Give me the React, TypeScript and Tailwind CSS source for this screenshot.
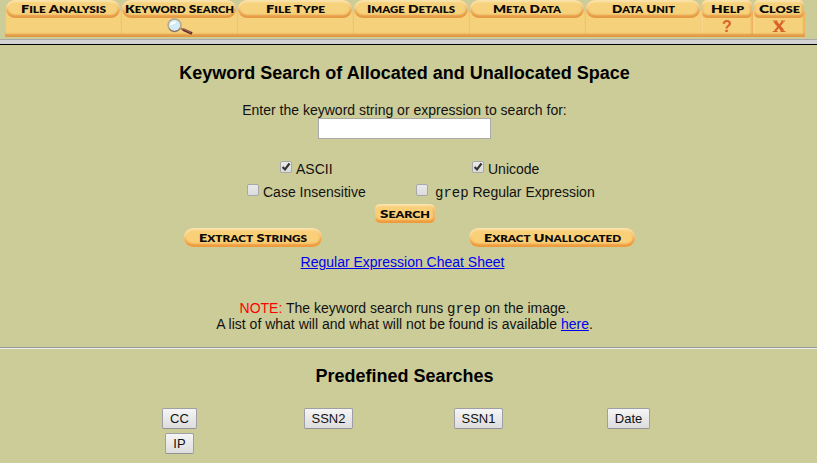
import React from "react";

function Caps({ text, width }: { text: string; width: number }) {
  return (
    <svg width={width} height="12" className="block overflow-visible" aria-label={text}>
      <text x="0" y="10" textLength={width} lengthAdjust="spacingAndGlyphs" fill="#0c0b08" fontFamily="Lato, sans-serif" fontWeight="800">
        {text.split(" ").map((w, i) => (
          <React.Fragment key={i}>
            <tspan fontSize="12">{(i ? " " : "") + w[0]}</tspan>
            <tspan fontSize="9.800">{w.slice(1)}</tspan>
          </React.Fragment>
        ))}
      </text>
    </svg>
  );
}

const tabs = [
  { label: "FILE ANALYSIS", cell: "w-[116px]", w: 85 },
  { label: "KEYWORD SEARCH", cell: "w-[116px]", w: 109, icon: "search" },
  { label: "FILE TYPE", cell: "w-[116px]", w: 59 },
  { label: "IMAGE DETAILS", cell: "w-[116px]", w: 88 },
  { label: "META DATA", cell: "w-[116px]", w: 68 },
  { label: "DATA UNIT", cell: "w-[116px]", w: 63 },
  { label: "HELP", cell: "w-[52px]", w: 33, icon: "help" },
  { label: "CLOSE", cell: "w-[52px]", w: 41, icon: "close" },
];

function Magnifier() {
  return (
    <svg width="28" height="18" viewBox="0 0 28 18" className="ml-0.5">
      <path d="M13 9.500 L18 12" stroke="#9c5d50" strokeWidth="1.800" />
      <path d="M17 11.500 L26 15.500" stroke="#6b2c2c" strokeWidth="3" />
      <path d="M17 10.800 L25 14.500" stroke="#b08a80" strokeWidth="0.7" />
      <circle cx="8.500" cy="7.300" r="6.400" fill="#d3ecf4" stroke="#b3a58f" strokeWidth="1.500" />
      <path d="M3.500 11 A6.400 6.400 0 0 0 13.500 11" fill="none" stroke="#7d5c50" strokeWidth="1" />
      <path d="M5 7 Q6 4 10 4.500" stroke="#fff" strokeWidth="2" fill="none" />
    </svg>
  );
}

function Tab({ t }: { t: (typeof tabs)[number] }) {
  const small = t.icon === "help" || t.icon === "close";
  const body = small
    ? "shadow-[inset_0_-4px_2px_-1px_#e39a45,inset_2px_0_1px_#f7d48c,inset_-2px_0_2px_#eeb45e]"
    : "shadow-[inset_0_-4px_2px_-1px_#e39a45,inset_1px_0_0_#f2c771]";
  return (
    <div className={`${t.cell} h-[37px] bg-[#f4d17a] ${body}`}>
      <div className="h-[18px] bg-[linear-gradient(#cccc99_60%,transparent_60%)]">
        <div className={`mx-px flex h-[18px] justify-center bg-[#f7d27c] pt-[3px] shadow-[inset_0_2px_2px_#fae5ae,inset_0_-3px_2px_#e59a44,inset_-2px_0_2px_#e9ad5e,inset_2px_0_2px_#f4c77c] ${small ? "rounded-[5px]" : "rounded-[9px]"}`}>
          <Caps text={t.label} width={t.w} />
        </div>
      </div>
      <div className="flex h-[18px] justify-center font-['Liberation_Sans',sans-serif] text-[16px] leading-[17px] font-bold text-[#d9622b]">
        {t.icon === "search" && <Magnifier />}
        {t.icon === "help" && "?"}
        {t.icon === "close" && (
          <svg width="14" height="17" viewBox="0 0 14 17"><path d="M3 3.500 L11 13" stroke="#d9622b" strokeWidth="3.200" /><path d="M11 3.500 L3 13" stroke="#d9622b" strokeWidth="2" /><path d="M0.800 3 H5.500 M8.800 3 H13 M0.800 13.500 H5.500 M8.500 13.500 H13.400" stroke="#d9622b" strokeWidth="1.200" /></svg>
        )}
      </div>
    </div>
  );
}

function Check({ on }: { on?: boolean }) {
  return (
    <span className="flex size-[12px] items-center justify-center rounded-[2px] border border-[#a9a7ae] bg-linear-to-b from-[#e9e9e9] to-[#dcdcdc]">
      {on && (
        <svg width="10" height="10" viewBox="0 0 10 10"><path d="M1.600 5 L4 7.500 L8.500 1.500" fill="none" stroke="#333" strokeWidth="2.100" /></svg>
      )}
    </span>
  );
}

function Pill({ text, width, box }: { text: string; width: number; box: string }) {
  return (
    <button aria-label={text} className={`flex h-[19px] justify-center bg-[#f9cf78] pt-[4px] shadow-[inset_0_2px_2px_#fbe3ad,inset_0_-3px_2px_#ee9a3d,inset_-2px_0_2px_#eeb05c] ${box}`}>
      <Caps text={text} width={width} />
    </button>
  );
}

function Btn({ text, box }: { text: string; box: string }) {
  return (
    <button className={`h-[21px] rounded-[2px] border border-[#a09fa6] border-b-[#929199] bg-linear-to-b from-[#f5f5f5] to-[#dddddd] text-[13px] leading-[19px] ${box}`}>{text}</button>
  );
}

const mono = "font-['Liberation_Mono',monospace] leading-[0]";

export default function App() {
  return (
    <div className="h-[463px] w-[817px] overflow-hidden bg-[#cccc99] font-['Liberation_Sans',Arial,sans-serif] text-[14px] leading-4 text-[#111]">
      <header className="h-[45px]">
        <nav className="flex h-[39px] pl-[5px]">{tabs.map((t) => <Tab key={t.label} t={t} />)}</nav>
        <div className="h-[5px] border-t border-[#aaa] bg-[#d2d2d2]" />
        <div className="h-px bg-black" />
      </header>
      <main className="flex h-[302px] w-[809px] flex-col items-center">
        <h1 className="mt-[18px] h-[20px] text-[18px] leading-[20px] font-bold text-black">Keyword Search of Allocated and Unallocated Space</h1>
        <label htmlFor="keyword" className="mt-[19px] h-4">Enter the keyword string or expression to search for:</label>
        <input id="keyword" className="h-[21px] w-[173px] border border-[#a9a9a9] bg-white px-1 outline-none" />
        <div className="mt-[22px] flex h-[23px] w-full pl-[280px]">
          <div className="flex w-[192px] gap-[4px]"><Check on /><span>ASCII</span></div>
          <div className="flex gap-[4px]"><Check on /><span>Unicode</span></div>
        </div>
        <div className="flex h-[20px] w-full pl-[247px]">
          <div className="flex w-[169px] gap-[4px]"><Check /><span>Case Insensitive</span></div>
          <div className="flex gap-[7px]"><Check /><span><span className={mono}>grep</span> Regular Expression</span></div>
        </div>
        <Pill text="SEARCH" width={50} box="w-[60px] rounded-[5px]" />
        <div className="mt-[5px] flex h-[26px] w-full gap-[147px] pl-[184px]">
          <Pill text="EXTRACT STRINGS" width={108} box="w-[138px] rounded-[10px]" />
          <Pill text="EXRACT UNALLOCATED" width={137} box="w-[166px] rounded-[10px]" />
        </div>
        <a className="mr-[4px] text-[#0000ee] underline">Regular Expression Cheat Sheet</a>
        <p className="mt-[30px] text-center"><span className="text-[#ff0000]">NOTE:</span> The keyword search runs <span className={mono}>grep</span> on the image.<br />A list of what will and what will not be found is available <a className="text-[#0000ee] underline">here</a>.</p>
      </main>
      <hr className="h-[2px] border-t border-b border-t-[#9a9a9a] border-b-[#eeeeee]" />
      <section className="w-[809px]">
        <h2 className="mt-[17px] h-[20px] text-center text-[18px] leading-[20px] font-bold text-black">Predefined Searches</h2>
        <div className="mt-[22px] ml-[105px] grid grid-cols-[149px_149px_151px_149px] justify-items-center gap-y-1">
          <Btn text="CC" box="w-[35px]" />
          <Btn text="SSN2" box="w-[49px]" />
          <Btn text="SSN1" box="w-[49px]" />
          <Btn text="Date" box="w-[43px]" />
          <Btn text="IP" box="w-[29px]" />
        </div>
      </section>
    </div>
  );
}
